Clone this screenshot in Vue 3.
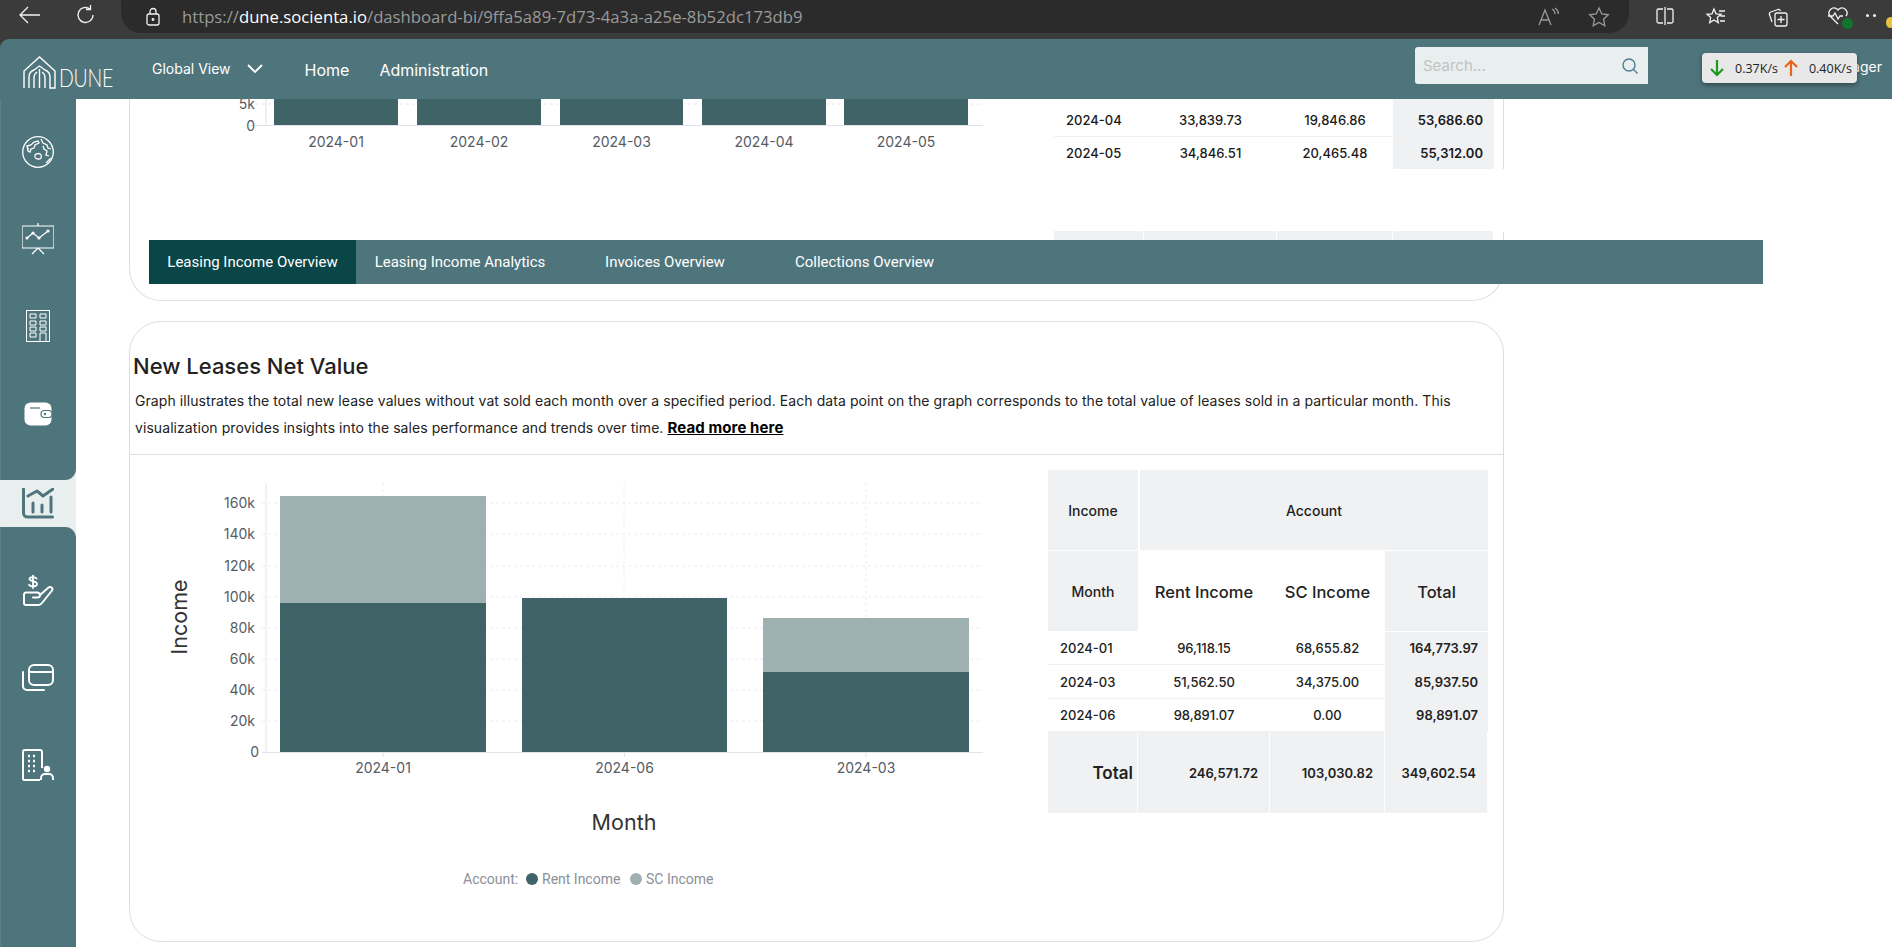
<script setup>
const tabs = [
  { label: 'Leasing Income Overview', w: 207, active: true },
  { label: 'Leasing Income Analytics', w: 208 },
  { label: 'Invoices Overview', w: 202 },
  { label: 'Collections Overview', w: 197 },
]
const topBars = [
  { x: 274, w: 124, label: '2024-01' },
  { x: 417, w: 124, label: '2024-02' },
  { x: 560, w: 123, label: '2024-03' },
  { x: 702, w: 124, label: '2024-04' },
  { x: 844, w: 124, label: '2024-05' },
]
const topRows = [
  { m: '2024-04', a: '33,839.73', b: '19,846.86', t: '53,686.60' },
  { m: '2024-05', a: '34,846.51', b: '20,465.48', t: '55,312.00' },
]
const ticks = [
  ['160k', 503], ['140k', 534], ['120k', 566], ['100k', 597], ['80k', 628],
  ['60k', 659], ['40k', 690], ['20k', 721], ['0', 752],
]
const bars = [
  { x: 280, w: 206, top: 496, mid: 603, label: '2024-01' },
  { x: 522, w: 205, top: 598, mid: 598, label: '2024-06' },
  { x: 763, w: 206, top: 618, mid: 672, label: '2024-03' },
]
const rows = [
  { m: '2024-01', a: '96,118.15', b: '68,655.82', t: '164,773.97' },
  { m: '2024-03', a: '51,562.50', b: '34,375.00', t: '85,937.50' },
  { m: '2024-06', a: '98,891.07', b: '0.00', t: '98,891.07' },
]
</script>

<template>
  <div class="page">
    <div class="chrome">
      <svg class="ci back" width="24" height="20" viewBox="0 0 24 20"><path d="M22 10H3M10 2l-8 8 8 8" /></svg>
      <svg class="ci reload" width="22" height="22" viewBox="0 0 22 22"><path d="M18 11a7.500 7.500 0 1 1-3-6M15.500 1v4.500H11" /></svg>
      <div class="addr">
        <svg class="ci" width="16" height="20" viewBox="0 0 16 20"><rect x="2" y="7" width="12" height="11" rx="2" /><path d="M5 7V4.500a3 3 0 0 1 6 0V7" /><circle cx="8" cy="12.500" r="0.800" /></svg>
        <div class="url"><span class="dim">https://</span>dune.socienta.io<span class="dim">/dashboard-bi/9ffa5a89-7d73-4a3a-a25e-8b52dc173db9</span></div>
        <svg class="ci muted readaloud" width="22" height="20" viewBox="0 0 22 20"><path d="M1 18 7 3l6 15M3 13h8M14 2c2 1 3 3 3 5M17 1c2 1.500 3.500 3.500 3.500 6" /></svg>
        <svg class="ci muted star" width="22" height="22" viewBox="0 0 22 22"><path d="m11 2 2.800 6 6.500.8-4.800 4.400 1.300 6.500L11 16.500l-5.800 3.200 1.300-6.500L1.700 8.800 8.200 8z" /></svg>
      </div>
      <svg class="ci tool split" width="20" height="20" viewBox="0 0 20 20"><path d="M8 3H3.500A1.500 1.500 0 0 0 2 4.500v11A1.500 1.500 0 0 0 3.500 17H8M12 3h4.500A1.500 1.500 0 0 1 18 4.500v11a1.500 1.500 0 0 1-1.500 1.500H12M10 1v18" /></svg>
      <svg class="ci tool fav" width="22" height="22" viewBox="0 0 22 22"><path d="m9 3 2 4.800 5 .5-3.700 3.300 1 5L9 14l-4.300 2.600 1-5L2 8.300l5-.5zM14 5h6M15.500 10H20M15 15h5" /></svg>
      <svg class="ci tool coll" width="22" height="22" viewBox="0 0 22 22"><rect x="8" y="7" width="12" height="13" rx="2" /><path d="M14 10v7M10.500 13.500h7M5 16 2.500 8.500a2 2 0 0 1 1.300-2.500L11 3.500a2 2 0 0 1 2.500 1.500" /></svg>
      <div class="heart">
        <svg class="ci" width="22" height="20" viewBox="0 0 22 20"><path d="M11 18 3 10a5 5 0 0 1 7-7l1 1 1-1a5 5 0 0 1 7 7M1 10h5l2-3 3 6 2-3h3" /></svg>
        <span class="badge"></span>
      </div>
      <div class="dots"></div>
      <span class="bulb"></span>
    </div>

    <header class="topbar">
      <div class="logo">
        <svg width="33" height="33" viewBox="0 0 33 33" fill="none" stroke="#fff" stroke-width="1.400"><path d="M1 32V15L16.500 1 32 15v17h-5V21q0-5-5-7M6 32V21q0-5 5-7l5.500-4 5.500 4M11 32V22q0-4 3-6M22 32V22q0-4-3-6M16.500 13v19" /></svg>
        <span class="logotext">DUNE</span>
      </div>
      <nav class="nav">
        <span class="global">Global View</span>
        <svg class="chev" width="16" height="10" viewBox="0 0 16 10" fill="none" stroke="#fff" stroke-width="1.800"><path d="m1 1 7 7 7-7" /></svg>
        <span class="link home">Home</span>
        <span class="link">Administration</span>
      </nav>
      <div class="search">
        <span class="ph">Search...</span>
        <svg width="18" height="18" viewBox="0 0 18 18" fill="none" stroke="#4f7f92" stroke-width="1.400"><circle cx="8" cy="8" r="6" /><path d="m12.500 12.500 4 4" /></svg>
      </div>
      <span class="user">Manager</span>
    </header>

    <div class="speed">
      <svg width="14" height="18" viewBox="0 0 14 18" fill="none" stroke="#1c9a1c" stroke-width="2.200"><path d="M7 1v15M1 10l6 6 6-6" /></svg>
      <span class="rate first">0.37K/s</span>
      <svg width="14" height="18" viewBox="0 0 14 18" fill="none" stroke="#e8641a" stroke-width="2.200"><path d="M7 17V2M1 8l6-6 6 6" /></svg>
      <span class="rate">0.40K/s</span>
    </div>

    <div class="body">
      <aside class="side">
        <div class="seg seg-top">
          <div class="item">
            <svg width="32" height="32" viewBox="0 0 32 32" fill="none" stroke="#fff" stroke-width="1.300"><circle cx="16" cy="16" r="15.300" /><path d="M5 10l4-1 3-3 4-1 1 2-4 2-1 3-3 1-1 3-2-1zM19 3l2 4 4 2 1 3 3 1M21 10l1 3 3 2-1 4 3 1M13 19c2-2 5-2 6 0s0 4-2 4-5 0-4-4zM29 22l-5 5M5 12l2 1" /></svg>
          </div>
          <div class="item">
            <svg width="32" height="32" viewBox="0 0 32 32" fill="none" stroke="#fff" stroke-width="1.200"><path d="M16 0v3M0 3h32v22H0zM16 25l-6 6M16 25l6 6" /><path d="m5 15 6-5 6 5 9-7" /><circle cx="5" cy="15" r="1" fill="#fff" /><circle cx="11" cy="10" r="1" fill="#fff" /><circle cx="17" cy="15" r="1" fill="#fff" /><circle cx="26" cy="8" r="1" fill="#fff" /></svg>
          </div>
          <div class="item">
            <svg width="32" height="32" viewBox="0 0 32 32" fill="none" stroke="#fff" stroke-width="1"><rect x="4.500" y="0.500" width="23" height="31" /><path d="M8 4h6v4H8zM18 4h6v4h-6zM8 11h6v4H8zM18 11h6v4h-6zM8 17h6v4H8zM18 17h6v4h-6zM8 23h6v4H8zM18 31v-8h6v8" /></svg>
          </div>
          <div class="item">
            <svg width="32" height="32" viewBox="0 0 32 32"><rect x="2.500" y="5.500" width="27" height="23" rx="6" fill="#fff" /><path d="M8 11h10" stroke="#4f757c" stroke-width="1.200" /><rect x="19" y="13.500" width="11" height="7" rx="3.500" fill="#fff" stroke="#4f757c" stroke-width="1.200" /><circle cx="23" cy="17" r="1.200" fill="#4f757c" /></svg>
          </div>
        </div>
        <div class="active">
          <svg width="32" height="31" viewBox="0 0 32 31" fill="none" stroke="#4f757c" stroke-width="3" stroke-linecap="round" stroke-linejoin="round"><path d="M1.500 1v24a4 4 0 0 0 4 4h25M6 8l9-5 6 5 10-7M11 24v-9M20 24v-7M29 24V9" /></svg>
        </div>
        <div class="seg seg-bot">
          <div class="item">
            <svg width="32" height="32" viewBox="0 0 32 32" fill="none" stroke="#fff" stroke-width="2" stroke-linecap="round" stroke-linejoin="round"><path d="M14.500 3.500C13 1.500 7.500 1.500 7.500 4s7.500 2 7.500 5-6 3-8 .8M11 .5v12.500" stroke-width="1.800" /><path d="M4 17.500h11c2 0 3 1 3 2.500s-1 2.500-3 2.500h-4M18 20l8.500-7.500c2-1.500 5 .5 3.500 3L20 28c-1 1.300-2 2-3.500 2H4a2 2 0 0 1-2-2v-8.500a2 2 0 0 1 2-2" /></svg>
          </div>
          <div class="item">
            <svg width="32" height="32" viewBox="0 0 32 32" fill="none" stroke="#fff" stroke-width="2" stroke-linecap="round"><rect x="7" y="3" width="24" height="20" rx="5" /><path d="M7 10h24M1 10v14a4 4 0 0 0 4 4h17" /></svg>
          </div>
          <div class="item">
            <svg width="32" height="32" viewBox="0 0 32 32" fill="none" stroke="#fff" stroke-width="2"><path d="M1 31V3a2 2 0 0 1 2-2h15a2 2 0 0 1 2 2v16M1 31h17" /><path d="M6 7h2M11 7h2M6 12h2M11 12h2M6 17h2M11 17h2M6 22h2M11 22h2" stroke-width="2.500" /><circle cx="25" cy="20" r="3.200" fill="#fff" stroke="none" /><path d="M19 31v-2a4 4 0 0 1 4-4h4a4 4 0 0 1 4 4v2" /></svg>
          </div>
        </div>
      </aside>

      <main class="main">
        <section class="card card-top">
          <svg class="chart-top" width="900" height="70" viewBox="130 99 900 70">
            <path d="M250 104H983" stroke="#e8e8ee" stroke-dasharray="3 3" />
            <rect v-for="b in topBars" :key="b.label" :x="b.x" y="90" :width="b.w" height="35" fill="#3f6367" />
            <path d="M250 125.500H983M266 99v27" stroke="#dfe1e8" />
            <text x="255" y="109" class="tick" text-anchor="end">5k</text>
            <text x="255" y="131" class="tick" text-anchor="end">0</text>
            <text v-for="b in topBars" :key="b.label + 't'" :x="b.x + b.w / 2" y="147" class="tick" text-anchor="middle">{{ b.label }}</text>
          </svg>
          <div class="t1">
            <div class="t1-grid">
              <i class="sl"></i><i class="sl"></i><i class="sl"></i><i class="sl soft"></i>
              <template v-for="r in topRows" :key="r.m">
                <div class="c c-m">{{ r.m }}</div>
                <div class="c">{{ r.a }}</div>
                <div class="c">{{ r.b }}</div>
                <div class="c soft c-t">{{ r.t }}</div>
              </template>
            </div>
            <div class="t1-gap"></div>
            <div class="t1-grid t1-foot">
              <i class="soft"></i><i class="soft"></i><i class="soft"></i><i class="soft"></i>
            </div>
          </div>
        </section>

        <section class="card card-main">
          <h2 class="title">New Leases Net Value</h2>
          <p class="desc">Graph illustrates the total new lease values without vat sold each month over a specified period. Each data point on the graph corresponds to the total value of leases sold in a particular month. This<br />visualization provides insights into the sales performance and trends over time. <a class="more">Read more here</a></p>
          <div class="rule"></div>
          <div class="card-body">
            <svg class="chart" width="900" height="485" viewBox="130 456 900 485">
              <path v-for="t in ticks.slice(0, -1)" :key="t[0]" :d="`M262 ${t[1]}H983`" stroke="#eeeef3" stroke-dasharray="3 3" />
              <path d="M383 483V752M624 483V752M866 483V752" stroke="#eeeef3" stroke-dasharray="3 3" />
              <template v-for="b in bars" :key="b.label">
                <rect :x="b.x" :y="b.top" :width="b.w" :height="b.mid - b.top" fill="#9fb0b1" />
                <rect :x="b.x" :y="b.mid" :width="b.w" :height="752 - b.mid" fill="#3f6367" />
                <path :d="`M${b.x + b.w / 2} 752v5`" stroke="#dfe1e8" />
                <text :x="b.x + b.w / 2" y="773" class="tick" text-anchor="middle">{{ b.label }}</text>
              </template>
              <path d="M262 752.500H983M266 483v270" stroke="#e3e4ec" />
              <text v-for="t in ticks" :key="t[0] + 'l'" :x="t[0] === '0' ? 259 : 255" :y="t[1] + 5" class="tick" text-anchor="end">{{ t[0] }}</text>
              <text class="axis" text-anchor="middle" transform="translate(187 617) rotate(-90)">Income</text>
              <text class="axis" x="624" y="830" text-anchor="middle">Month</text>
              <text class="legend" x="463" y="884">Account:</text>
              <circle cx="532" cy="879" r="6" fill="#3f6367" />
              <text class="legend" x="542" y="884">Rent Income</text>
              <circle cx="636" cy="879" r="6" fill="#9fb0b1" />
              <text class="legend" x="646" y="884">SC Income</text>
            </svg>
            <div class="t2">
              <div class="h soft">Income</div>
              <div class="h soft span3">Account</div>
              <div class="h soft">Month</div>
              <div class="h big">Rent Income</div>
              <div class="h big">SC Income</div>
              <div class="h big soft">Total</div>
              <template v-for="r in rows" :key="r.m">
                <div class="d d-m">{{ r.m }}</div>
                <div class="d">{{ r.a }}</div>
                <div class="d">{{ r.b }}</div>
                <div class="d soft d-t">{{ r.t }}</div>
              </template>
              <div class="f soft f-l">Total</div>
              <div class="f soft">246,571.72</div>
              <div class="f soft">103,030.82</div>
              <div class="f soft">349,602.54</div>
            </div>
          </div>
        </section>

        <div class="tabs">
          <div v-for="t in tabs" :key="t.label" class="tab" :class="{ on: t.active }" :style="{ width: t.w + 'px' }">{{ t.label }}</div>
        </div>
      </main>
    </div>
  </div>
</template>

<style>
html, body { margin: 0; height: 100%; overflow: hidden; background: #fff; }
</style>

<style scoped>
.page { width: 1892px; height: 947px; position: relative; overflow: hidden; background: #3b3b3b; font-family: Inter, "Noto Sans", sans-serif; }

.chrome { height: 39px; display: flex; align-items: flex-start; background: #3b3b3b; position: relative; }
.ci { fill: none; stroke: #f2f2f2; stroke-width: 1.300; flex: none; }
.ci.muted { stroke: #9a9a9a; }
.back { margin: 5px 0 0 18px; }
.reload { margin: 4px 0 0 33px; }
.addr { margin-left: 24px; width: 1508px; height: 33px; background: #2b2b2b; border-radius: 0 0 20px 20px; display: flex; align-items: center; padding-left: 24px; box-sizing: border-box; }
.url { margin-left: 21px; color: #fff; font: 16.700px/20px "Open Sans", sans-serif; white-space: nowrap; flex: 1; }
.dim { color: #9a9a9a; }
.readaloud { margin-right: 28px; }
.star { margin-right: 19px; }
.tool { margin-top: 6px; }
.split { margin-left: 26px; }
.fav { margin-left: 30px; }
.coll { margin-left: 40px; }
.heart { margin: 6px 0 0 38px; position: relative; width: 22px; height: 20px; }
.badge { position: absolute; right: -4px; bottom: -3px; width: 11px; height: 11px; border-radius: 50%; background: #12762a; }
.dots { margin: 14px 0 0 17px; width: 3px; height: 3px; border-radius: 50%; background: #f2f2f2; box-shadow: 7px 0 0 #f2f2f2; }
.bulb { position: absolute; right: -3px; top: 17px; width: 9px; height: 11px; border-radius: 50%; background: #e8c23a; }

.topbar { height: 60px; background: #4f757c; border-radius: 9px 0 0 0; display: flex; align-items: center; padding: 0 10px 0 23px; box-sizing: border-box; color: #fff; position: relative; }
.logo { display: flex; align-items: flex-end; width: 129px; height: 33px; margin-top: 7px; }
.logotext { font: 300 25px/24px Lato, sans-serif; margin-left: 3px; letter-spacing: -0.300px; transform: scaleX(0.78); transform-origin: left; }
.nav { display: flex; align-items: center; flex: 1; }
.global { font-size: 14px; margin-bottom: 2px; }
.chev { margin: 0 0 0 16px; }
.link { font-size: 16px; margin-top: 2px; }
.home { margin-left: 42px; margin-right: 30px; }
.search { width: 233px; height: 37px; background: #e9eeee; border-radius: 3px 0 0 3px; display: flex; align-items: center; justify-content: space-between; padding: 0 9px 0 8px; box-sizing: border-box; margin-top: -7px; }
.ph { color: #bfc4c4; font-size: 15px; }
.user { width: 234px; text-align: right; font-size: 14px; margin-bottom: 6px; }

.speed { position: absolute; left: 1702px; top: 53px; width: 155px; height: 30px; background: #e8e8e8; border-radius: 4px; box-shadow: 0 2px 5px rgba(0, 0, 0, .4); display: flex; align-items: center; padding-left: 8px; box-sizing: border-box; color: #222; font: 12.500px "Open Sans", sans-serif; }
.rate { margin-left: 11px; }
.rate.first { margin-right: 6px; }

.body { height: 848px; display: flex; }
.side { width: 76px; flex: none; background: #e9eeee; display: flex; flex-direction: column; }
.seg { background: #4f757c; box-shadow: inset 1px 0 0 #5f7f84; }
.seg-top { height: 381px; padding-top: 9.500px; box-sizing: border-box; border-bottom-right-radius: 11px; }
.seg-bot { flex: 1; padding-top: 20px; border-top-right-radius: 11px; }
.item { height: 87px; display: flex; align-items: center; justify-content: center; }
.active { height: 47px; display: flex; align-items: center; justify-content: center; }

.main { flex: 1; background: #fff; padding-left: 53px; position: relative; overflow: hidden; }
.card { width: 1375px; box-sizing: border-box; border: 1px solid #dcdede; background: #fff; }
.card-top { height: 202px; border-top: 0; border-radius: 0 0 32px 32px; display: flex; }
.chart-top { flex: none; }
.tick { font: 14px Inter, sans-serif; fill: #565b64; }
.axis { font: 21.500px Inter, sans-serif; fill: #333; }
.legend { font: 14px Roboto, sans-serif; fill: #8a8f99; }

.soft { background: #f0f1f3; }
.t1 { margin-left: 24px; position: relative; width: 440px; font-size: 13px; font-weight: 500; color: #1a1a1a; }
.t1::after { content: ""; position: absolute; right: -11px; top: 70px; width: 3px; height: 63px; background: #fff; }
.t1-grid { display: grid; grid-template-columns: 90px 133px 116px 101px; }
.sl { height: 4px; }
.c { height: 33px; border-bottom: 1px solid #f1f1f1; display: flex; align-items: center; justify-content: center; }
.c:nth-last-child(-n + 4) { height: 32px; border-bottom: 0; }
.c-m { justify-content: flex-start; padding-left: 12px; }
.c-t { justify-content: flex-end; padding-right: 11px; font-weight: 600; }
.t1-gap { height: 62px; }
.t1-foot i { height: 30px; border-right: 1px solid #fff; }

.card-main { margin-top: 20px; height: 621px; border-radius: 32px; }
.title { margin: 0; padding: 28px 0 0 3px; font-size: 22px; font-weight: 500; line-height: 32px; color: #222; }
.desc { margin: 6px 0 13px; padding-left: 5px; font-size: 14px; letter-spacing: 0.070px; line-height: 26.500px; color: #222; white-space: nowrap; }
.more { font-weight: 700; font-size: 15px; letter-spacing: 0.100px; color: #000; text-decoration: underline; }
.rule { height: 1px; background: #dcdede; }
.card-body { display: flex; padding-top: 1px; }
.chart { flex: none; }
.t2 { margin: 14px 0 0 18px; display: grid; grid-template-columns: 90px 132px 115px 103px; grid-template-rows: 81px 81px 33px 34px 33px 81px; height: 343px; color: #222; font-size: 13px; font-weight: 500; }
.h { display: flex; align-items: center; justify-content: center; box-shadow: inset 0 -1px 0 #fff; font-size: 14px; }
.span3 { grid-column: span 3; border-left: 2px solid #fff; }
.big { font-size: 16.500px; }
.d { display: flex; align-items: center; justify-content: center; border-bottom: 1px solid #f1f1f1; box-sizing: border-box; }
.d-m { justify-content: flex-start; padding-left: 12px; }
.d-t { justify-content: flex-end; padding-right: 10px; font-weight: 600; }
.f { display: flex; align-items: center; justify-content: flex-end; padding-right: 12px; box-shadow: inset -1px 0 0 #fff; font-weight: 600; }
.f-l { font-size: 17px; padding-right: 5px; }

.tabs { position: absolute; left: 73px; top: 141px; width: 1614px; height: 44px; background: #4f757c; display: flex; font: 15px/44px Roboto, sans-serif; color: #fff; }
.tab { text-align: center; box-sizing: border-box; white-space: nowrap; }
.tab.on { background: #0a4647; }
</style>
